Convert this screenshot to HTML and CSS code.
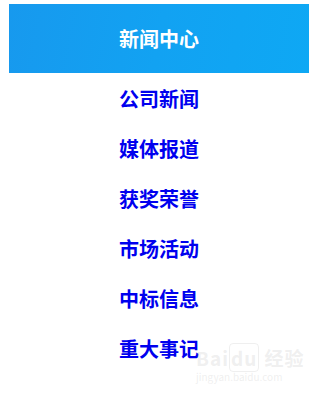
FILE: index.html
```html
<!DOCTYPE html>
<html lang="zh-CN">
  <head>
    <meta charset="UTF-8" />
    <meta name="viewport" content="width=device-width, initial-scale=1.0" />
    <title>新闻中心</title>
    <link rel="stylesheet" href="styles.css">
  </head>
  <body>
    <div class="news-box">
      <div class="news-title">新闻中心</div>
      <ul class="news-menu">
        <li><a href="#">公司新闻</a></li>
        <li><a href="#">媒体报道</a></li>
        <li><a href="#">获奖荣誉</a></li>
        <li><a href="#">市场活动</a></li>
        <li><a href="#">中标信息</a></li>
        <li><a href="#">重大事记</a></li>
      </ul>
    </div>

    <!-- watermark -->
    <div class="watermark">
      <div class="wm-logo">Bai<span class="paw">du</span> 经验</div>
      <div class="wm-url">jingyan.baidu.com</div>
    </div>
  </body>
</html>
```

FILE: styles.css
```css
* {
  margin: 0;
  padding: 0;
  box-sizing: border-box;
  font-family: "Noto Sans CJK SC", "Noto Sans", sans-serif;
}
body,
html {
  width: 100%;
  height: 100%;
  background: #fff;
}

/* TITLE */
.news-box {
  padding-top: 4px;
}
.news-title {
  margin-left: 9px;
  width: 300px;
  height: 69px;
  display: flex;
  align-items: center;
  justify-content: center;
  color: #fff;
  font-size: 20px;
  font-weight: 700;
  background: radial-gradient(
      ellipse 420px 80px at 230px 150px,
      rgba(255, 255, 255, 0) 60%,
      rgba(255, 255, 255, 0.08) 62%,
      rgba(255, 255, 255, 0) 75%
    ),
    linear-gradient(100deg, #1799ee 0%, #12a2f2 50%, #0ea8f4 100%);
}

/* MENU */
.news-menu {
  list-style: none;
  padding-left: 119px;
  padding-top: 1px;
}
.news-menu li {
  height: 50px;
  line-height: 50px;
}
.news-menu li a {
  color: #0000ee;
  font-size: 20px;
  font-weight: 700;
  text-decoration: none;
}

/* WATERMARK */
.watermark {
  position: absolute;
  left: 196px;
  top: 346px;
  color: rgba(215, 215, 215, 0.4);
}
.wm-logo {
  font-size: 19px;
  font-weight: 700;
  line-height: 24px;
  letter-spacing: 1px;
}
.wm-logo .paw {
  border: 1px solid rgba(215, 215, 215, 0.4);
  border-radius: 4px;
  padding: 0 1px;
}
.wm-url {
  font-size: 10px;
  line-height: 14px;
}
```
